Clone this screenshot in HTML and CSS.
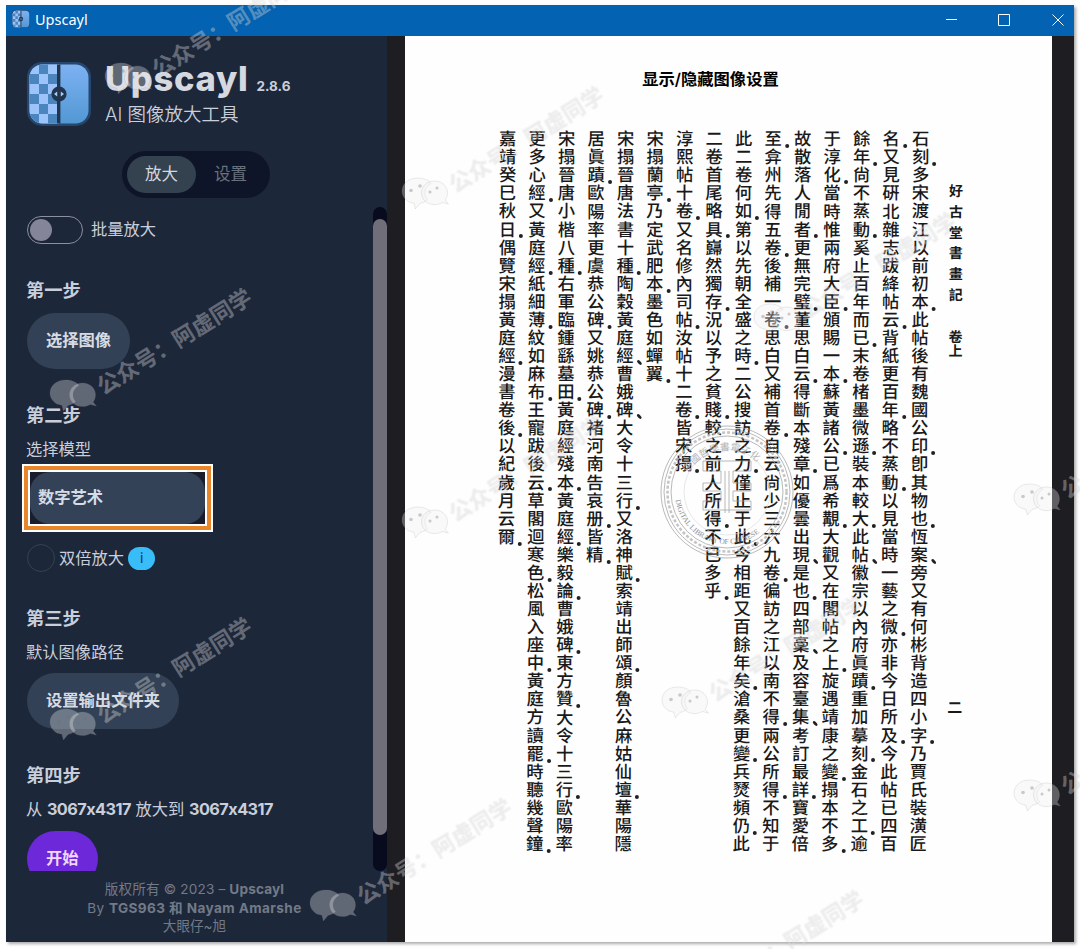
FILE: index.html
```html
<!DOCTYPE html>
<html lang="zh-CN">
<head>
<meta charset="utf-8">
<title>Upscayl</title>
<link rel="stylesheet" href="styles.css">
</head>
<body>
<svg class="defs" width="0" height="0" aria-hidden="true">
  <symbol id="logo" viewBox="0 0 64 64">
    <defs>
      <linearGradient id="lg" x1="0" y1="0" x2="0" y2="1"><stop offset="0" stop-color="#7fb2f4"/><stop offset="1" stop-color="#5097d2"/></linearGradient>
      <clipPath id="lc"><rect x="2.5" y="2.5" width="59" height="59" rx="13"/></clipPath>
    </defs>
    <rect x="0" y="0" width="64" height="64" rx="15" fill="#26466e"/>
    <g clip-path="url(#lc)">
      <rect width="64" height="64" fill="url(#lg)"/>
      <rect width="32" height="64" fill="#9cc3fa"/>
      <path fill="#4a86bd" d="M12 2h9v10h-9zM2 12h10v10H2zM21 12h9v10h-9zM12 22h9v10h-9zM2 32h10v10H2zM21 32h9v10h-9zM12 42h9v10h-9zM2 52h10v10H2zM21 52h9v10h-9z"/>
      <rect x="30" width="3.4" height="64" fill="#22354f"/>
    </g>
    <circle cx="32" cy="32" r="7.6" fill="#22354f"/>
    <path fill="#a9cbf5" d="M30.2 29.4v5.2L27 32zM33.8 29.4v5.2L37 32z"/>
  </symbol>
  <symbol id="bubbles" viewBox="0 0 48 34">
    <path d="M16.500 1C7.500 1 1 6.600 1 14c0 4.600 2.700 8.500 6.900 10.900l5 1.400 1.500 5.700 4.600-5.600c3-.5 5.500-1.700 7.500-3.600-5-6.200-2.500-13.500 3.500-16.400C27.500 2.900 22.500 1 16.500 1z"/>
    <path d="M33.500 4c-7.500 0-13 5.100-13 11.800s5.500 11.800 13 11.800c3 0 5.700-.8 7.900-2.100l6 1.600-3.300-4c1.500-1.900 2.400-4.400 2.400-7.300C46.500 9.100 41 4 33.500 4z"/>
    <g class="eye"><circle cx="10" cy="13.500" r="1.800"/><circle cx="19" cy="9" r="1.800"/><circle cx="29" cy="15" r="1.500"/><circle cx="36" cy="11" r="1.500"/></g>
  </symbol>
</svg>

<div class="window">
  <header class="titlebar">
    <svg class="app-icon"><use href="#logo"/></svg>
    <span class="app-name">Upscayl</span>
    <svg class="controls" viewBox="0 0 130 30"><path d="M6 13.500h11M58.500 8.500h11v11h-11zM112.500 8.500l11 11M123.500 8.500l-11 11"/></svg>
  </header>
  <div class="body">
    <aside class="sidebar">
      <div class="brand">
        <svg class="logo"><use href="#logo"/></svg>
        <div>
          <div class="brand-line"><span class="brand-name">Upscayl</span><span class="version">2.8.6</span></div>
          <div class="tagline">AI 图像放大工具</div>
        </div>
      </div>
      <div class="tabs"><span class="tab active">放大</span><span class="tab">设置</span></div>
      <div class="scroller">
        <div class="steps">
          <div class="row"><span class="switch"></span><span>批量放大</span></div>
          <h2>第一步</h2>
          <button class="btn">选择图像</button>
          <h2>第二步</h2>
          <p>选择模型</p>
          <div class="highlight"><div class="well"><div class="select">数字艺术</div></div></div>
          <div class="double"><span class="check"></span><span>双倍放大</span><span class="info">i</span></div>
          <h2>第三步</h2>
          <p>默认图像路径</p>
          <button class="btn">设置输出文件夹</button>
          <h2>第四步</h2>
          <p>从 <b>3067x4317</b> 放大到 <b>3067x4317</b></p>
          <button class="btn start">开始</button>
        </div>
        <div class="track"><div class="thumb"></div></div>
      </div>
      <footer class="footer">
        <div>版权所有 © 2023 – <b>Upscayl</b></div>
        <div class="by">By <b>TGS963 和 Nayam Amarshe</b></div>
        <div>大眼仔~旭</div>
      </footer>
    </aside>
    <main class="viewer">
      <div class="page">
        <div class="page-title">显示/隐藏图像设置</div>
        <div class="scan">
          <div class="side"><span class="book">好古堂書畫記</span><span class="volume">卷上</span><span class="leaf">二</span></div>
          <div class="text">
            <div>石刻<i></i>多宋渡江以前初本<i></i>此帖後有魏國公印<i></i>卽其物也<i></i>恆案<u></u>旁又有何彬背造四小字<i></i>乃賈氏裝潢匠</div>
            <div>名<i></i>又見硏北雜志跋絳帖云<i></i>背紙更百年<i></i>略不蒸動<i></i>以見當時一藝之微<i></i>亦非今日所及<i></i>今此帖已四百</div>
            <div>餘年<i></i>尙不蒸動<i></i>奚止百年而已<i></i>末卷楮墨微遜<i></i>裝本較大<i></i>此帖<u></u>徽宗以內府眞蹟<i></i>重加摹刻<i></i>金石之工<i></i>逾</div>
            <div>于淳化<i></i>當時惟兩府大臣<i></i>頒賜一本<i></i>蘇黃諸公<i></i>已爲希覯<i></i>大觀又在閣帖之上<i></i>旋遇靖康之變<i></i>搨本不多<i></i></div>
            <div>故散落人閒者<i></i>更無完璧<i></i>董思白云<i></i>得斷本殘章<i></i>如優曇出現<u></u>是也<i></i>四部稾<u></u>及容臺集<u></u>考訂最詳<i></i>寶愛倍</div>
            <div>至<i></i>弇州先得五卷<i></i>後補一卷<i></i>思白又補首卷<i></i>自云尙少三六九卷<i></i>徧訪之江以南不得<i></i>兩公所得<i></i>不知于</div>
            <div>此二卷何如<i></i>第以先朝全盛之時<i></i>二公搜訪之力<i></i>僅止于此<i></i>今相距又百餘年矣<i></i>滄桑更變<i></i>兵燹頻仍<i></i>此</div>
            <div>二卷首尾略具<i></i>巋然獨存<i></i>況以予之貧賤<i></i>較之前人所得<i></i>不已多乎<i></i></div>
            <div>淳熙帖十卷<i></i>又名修內司帖<i></i>汝帖十二卷<i></i>皆宋搨<i></i></div>
            <div>宋搨蘭亭<i></i>乃定武肥本<i></i>墨色如蟬翼<i></i></div>
            <div>宋搨晉唐法書十種<i></i>陶穀黃庭經<u></u>曹娥碑<u></u>大令十三行<i></i>又洛神賦<i></i>索靖出師頌<i></i>顏魯公麻姑仙壇<i></i>華陽隱</div>
            <div>居眞蹟<i></i>歐陽率更虞恭公碑<i></i>又姚恭公碑<i></i>褚河南告哀册<i></i>皆精<i></i></div>
            <div>宋搨晉唐小楷八種<i></i>右軍臨鍾繇墓田<i></i>黃庭經殘本<i></i>黃庭經<i></i>樂毅論<i></i>曹娥碑<i></i>東方贊<i></i>大令十三行<i></i>歐陽率</div>
            <div>更多心經<i></i>又黃庭經<i></i>紙細薄<i></i>紋如麻布<i></i>王寵跋後云<i></i>草閣迴寒色<i></i>松風入座中<i></i>黃庭方讀罷<i></i>時聽幾聲鐘<i></i></div>
            <div>嘉靖癸巳秋日<i></i>偶覽宋搨黃庭經<i></i>漫書卷後<i></i>以紀歲月云爾<i></i></div>
          </div>
        </div>
        <svg class="seal" viewBox="0 0 136 136">
          <circle cx="68" cy="68" r="66"/><circle cx="68" cy="68" r="63"/><circle class="rope" cx="68" cy="68" r="59.500"/><circle cx="68" cy="68" r="56"/><circle class="thin" cx="68" cy="68" r="43"/>
          <path class="glyph" d="M44 37h48v10H74v12h18v8H74v10h18v9H44v-9h18V67H44v-8h18V47H44zM66 47v42M70 47v42"/>
          <path id="arc-b" class="none" d="M16 68a52 52 0 0 0 104 0"/><path id="arc-t" class="none" d="M24 62a45 45 0 0 1 88 0"/>
          <text><textPath href="#arc-b" startOffset="8">DIGITAL LIBRARY OF CHINESE</textPath></text>
          <text class="cn"><textPath href="#arc-t" startOffset="14">中國哲學書電子化</textPath></text>
        </svg>
      </div>
    </main>
  </div>
</div>

<div class="marks">
  <div class="mark" style="left:104px;top:62px"><svg><use href="#bubbles"/></svg><span>公众号：阿虚同学</span></div>
  <div class="mark" style="left:49px;top:379px"><svg><use href="#bubbles"/></svg><span>公众号：阿虚同学</span></div>
  <div class="mark" style="left:49px;top:708px"><svg><use href="#bubbles"/></svg><span>公众号：阿虚同学</span></div>
  <div class="mark" style="left:309px;top:889px"><svg><use href="#bubbles"/></svg><span>公众号：阿虚同学</span></div>
  <div class="mark" style="left:401px;top:177px"><svg><use href="#bubbles"/></svg><span>公众号：阿虚同学</span></div>
  <div class="mark" style="left:401px;top:506px"><svg><use href="#bubbles"/></svg><span>公众号：阿虚同学</span></div>
  <div class="mark" style="left:661px;top:686px"><svg><use href="#bubbles"/></svg><span>公众号：阿虚同学</span></div>
  <div class="mark" style="left:753px;top:303px"><svg><use href="#bubbles"/></svg><span>公众号：阿虚同学</span></div>
  <div class="mark" style="left:661px;top:981px"><svg><use href="#bubbles"/></svg><span>公众号：阿虚同学</span></div>
  <div class="mark" style="left:1013px;top:483px"><svg><use href="#bubbles"/></svg><span>公众号：阿虚同学</span></div>
  <div class="mark" style="left:1013px;top:779px"><svg><use href="#bubbles"/></svg><span>公众号：阿虚同学</span></div>
</div>
</body>
</html>
```
FILE: styles.css
```css
* { box-sizing: border-box; }
body {
  margin: 0; width: 1080px; height: 949px; overflow: hidden;
  padding: 5px 5px 7px 6px; background: #fff; position: relative;
  font-family: Inter, "Noto Sans CJK SC", sans-serif;
}
.defs { position: absolute; }
.window {
  width: 1068px; height: 937px; display: flex; flex-direction: column;
  background: #1e1d22; box-shadow: 2px 2px 3px #aaa;
}
.titlebar {
  height: 31px; background: #0362b1; display: flex; align-items: center;
  padding: 0 5px 0 6px; color: #fff; flex: none;
}
.app-icon { width: 18px; height: 18px; margin-bottom: 3px; }
.app-name { font: 14.5px "Noto Sans", "Open Sans", sans-serif; margin: 0 0 4px 5px; flex: 1; }
.controls { width: 130px; height: 30px; margin-right: -1px; fill: none; stroke: #fff; stroke-width: 1; }
.body { flex: 1; display: flex; min-height: 0; }

.sidebar {
  width: 381px; background: #1d273a; color: #c9cfda; display: flex; flex-direction: column;
}
.brand { display: flex; gap: 14px; padding: 26px 0 0 21px; height: 115px; flex: none; }
.logo { width: 64px; height: 64px; }
.brand-line { display: flex; align-items: baseline; gap: 8px; height: 40px; line-height: 34px; }
.brand-name { font-size: 34.500px; font-weight: 800; letter-spacing: .7px; color: #d5d8df; }
.version { font-size: 13.500px; font-weight: 700; letter-spacing: 0; }
.tagline { font-size: 18.500px; line-height: 25px; letter-spacing: 0; font-weight: 350; }
.tabs {
  flex: none; width: 148px; height: 47px; margin-left: 116px; padding: 5px; border-radius: 24px;
  background: #0e1528; display: flex;
}
.tab {
  width: 69px; height: 37px; border-radius: 19px; font-size: 16.500px; line-height: 36px;
  text-align: center; color: #69717e;
}
.tab.active { background: #34424f; color: #d3d8df; }
.scroller { flex: none; height: 664px; margin-top: 9px; display: flex; overflow: hidden; }
.steps { flex: 1; padding: 9px 0 0 21px; font-size: 16.300px; display: flex; flex-direction: column; align-items: flex-start; }
.row { display: flex; gap: 8px; height: 28px; line-height: 27px; flex: none; }
.switch { width: 56px; height: 28px; border: 1px solid #8a909c; border-radius: 14px; padding: 2px; }
.switch::before { content: ""; display: block; width: 22px; height: 22px; border-radius: 50%; background: #85859a; }
h2 { flex: none; margin: 32px 0 0 -1px; height: 28px; line-height: 28px; font-size: 18.300px; font-weight: 700; }
p { flex: none; margin: 8px 0 0 -1px; height: 24px; line-height: 24px; }
p b { letter-spacing: -.55px; }
.btn {
  flex: none; margin: 9px 0 0; height: 56px; padding: 0 19px 2px; border: 0; border-radius: 28px;
  background: #324155; color: #d7dce4; font: inherit; font-weight: 700; line-height: 54px;
}
.btn.start { background: #6d28d9; color: #f0d6ff; margin-top: 10px; padding-bottom: 5px; }
.highlight {
  flex: none; width: 191px; height: 68px; margin: 3px 0 0 -5px; border: 2px solid #fff;
  background: #e8862c; padding: 4px;
}
.well { height: 56px; border: 2px solid #fff; background: #191d2c; }
.select {
  height: 52px; border-radius: 20px; background: #344257; color: #d7dce4;
  font-weight: 700; line-height: 51px; padding-left: 8px;
}
.double { flex: none; display: flex; align-items: center; margin-top: 12px; height: 28px; line-height: 26px; }
.double > span:nth-child(2) { padding-bottom: 1px; }
.check { width: 28px; height: 28px; border: 1px solid #364151; border-radius: 50%; margin-right: 4px; }
.info {
  width: 27px; height: 23px; border-radius: 12px; margin-left: 4px; background: #38bdf8;
  color: #12314a; font-size: 14px; line-height: 22px; text-align: center;
}
.track { width: 14px; height: 664px; padding-top: 12px; border-radius: 7px; background: #080b1e; }
.thumb { height: 616px; border-radius: 7px; background: #706f79; }
.footer {
  padding: 9px 4px 0 0; text-align: center; font-size: 13.600px; line-height: 18.500px; color: #727a87;
}
.footer div:first-child { letter-spacing: .15px; }
.footer .by { letter-spacing: .4px; }

.viewer { flex: 1; padding-left: 18px; }
.page { position: relative; width: 647px; height: 906px; background: #fefefe; color: #000; }
.page-title { padding-top: 31px; width: 611px; text-align: center; font-size: 16.300px; line-height: 24px; font-weight: 600; }
.scan {
  display: flex; flex-direction: row-reverse; gap: 11px; padding: 38px 87px 0 0; transform: skewX(-.2deg);
  font-family: "Noto Sans CJK TC", "Noto Sans CJK JP", sans-serif; color: #191919;
}
.text {
  writing-mode: vertical-rl; font-size: 17.300px; letter-spacing: .78px; line-height: 29.500px;
  height: 750px; font-weight: 500; flex: none; margin-top: 1px;
}
.text div { height: 750px; white-space: nowrap; }
.text i, .text u { display: inline-block; position: relative; width: 0; height: 0; vertical-align: baseline; }
.text i::before, .text u::before {
  content: ""; position: absolute; left: 12px; top: -4px; width: 4px; height: 4px;
  border-radius: 50%; background: #222;
}
.text u::before { width: 6px; height: 3px; transform: rotate(45deg); }
.side { flex: none; writing-mode: vertical-rl; width: 20px; line-height: 20px; white-space: nowrap; padding-top: 55px; font-weight: 700; }
.book { font-size: 14px; letter-spacing: 6.700px; }
.volume { display: inline-block; margin-top: 22px; font-size: 14px; }
.leaf { display: inline-block; margin-top: 342px; font-size: 15px; }
.seal { position: absolute; left: 254px; top: 388px; width: 136px; height: 136px; fill: none; stroke: #999; stroke-width: .8; opacity: .85; }
.seal .rope { stroke-dasharray: 3 2; stroke-width: 2.500; stroke: #bbb; }
.seal .thin { stroke: #ddd; }
.seal .glyph { stroke: #999; }
.seal .none { stroke: none; }
.seal text { font: 7.500px "Liberation Serif", serif; fill: #777; stroke: none; }
.seal .cn { font: 10px "Noto Sans CJK TC", sans-serif; fill: #aaa; }

.marks { position: absolute; inset: 0; overflow: hidden; pointer-events: none; }
.mark { position: absolute; width: 48px; height: 34px; }
.mark svg { width: 48px; height: 34px; display: block; fill: rgba(240,240,242,.32); stroke: rgba(130,130,130,.2); stroke-width: .8; }
.eye { fill: rgba(110,110,120,.35); stroke: none; }
.mark span {
  position: absolute; left: 49px; top: -7px; white-space: nowrap; transform-origin: 0 50%;
  transform: rotate(-32deg); font: 700 22.200px/30px "Noto Sans CJK SC", sans-serif;
  color: rgba(250,250,252,.3); text-shadow: 0 0 1.500px rgba(120,120,120,.17);
}
```
